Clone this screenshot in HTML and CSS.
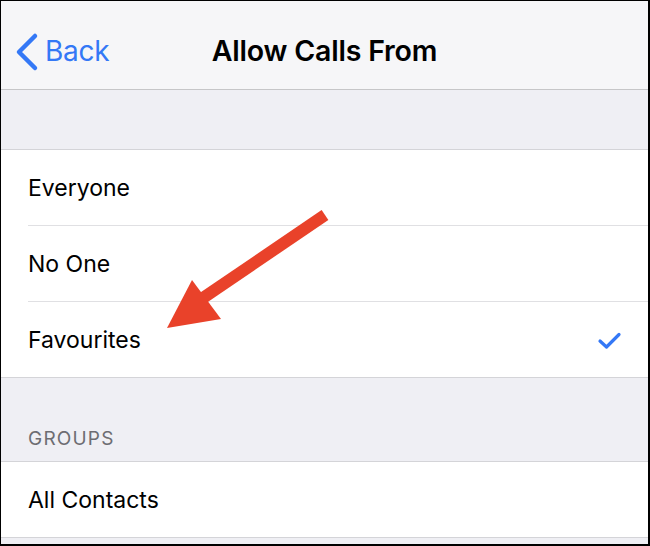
FILE: index.html
```html
<!DOCTYPE html>
<html>
<head>
<meta charset="utf-8">
<link rel="stylesheet" href="styles.css">
</head>
<body>
<div class="screen">
  <header class="nav">
    <div class="back">
      <svg class="chev" width="24" height="40" viewBox="0 0 24 40"><path d="M20 4 L4 20 L20 36" fill="none" stroke="#3478f6" stroke-width="4.5" stroke-linecap="round" stroke-linejoin="round"/></svg>
      <span>Back</span>
    </div>
    <div class="title">Allow Calls From</div>
  </header>
  <div class="gap gap-top"></div>
  <div class="group">
    <div class="row"><span>Everyone</span></div>
    <div class="row"><span>No One</span></div>
    <div class="row last"><span>Favourites</span>
      <svg class="check" width="26" height="20" viewBox="0 0 26 20"><path d="M3 10 L9.5 16 L22 3.5" fill="none" stroke="#3478f6" stroke-width="3.2" stroke-linecap="round" stroke-linejoin="round"/></svg>
    </div>
  </div>
  <div class="gap gap-groups"><span>GROUPS</span></div>
  <div class="group">
    <div class="row last"><span>All Contacts</span></div>
  </div>
  <div class="gap gap-bottom"></div>
  <svg class="arrow" width="650" height="546" viewBox="0 0 650 546">
    <line x1="325" y1="215" x2="200" y2="300" stroke="#e9422a" stroke-width="12"/>
    <polygon points="192,280 167,328 221,319" fill="#e9422a"/>
  </svg>
</div>
</body>
</html>
```
FILE: styles.css
```css
html, body {
  margin: 0;
  padding: 0;
  background: #000;
}
body {
  width: 650px;
  height: 546px;
  overflow: hidden;
}
.screen {
  position: relative;
  margin: 1px 2px 0 1px;
  height: 543px;
  background: #efeff4;
  font-family: Inter, "Noto Sans", sans-serif;
  overflow: hidden;
}
.nav {
  height: 88px;
  background: #f6f6f8;
  border-bottom: 1px solid #c6c6c8;
  display: flex;
  align-items: center;
  justify-content: center;
  position: relative;
}
.back {
  position: absolute;
  left: 14px;
  top: 31px;
  display: flex;
  align-items: center;
  gap: 6px;
  color: #3478f6;
  font-size: 28px;
  letter-spacing: -0.3px;
}
.back span {
  margin-top: -2px;
}
.title {
  font-size: 28.5px;
  font-weight: 600;
  color: #000;
  letter-spacing: -0.2px;
  margin-top: 10px;
}
.gap-top {
  height: 59px;
  border-bottom: 1px solid #d4d4d8;
}
.group {
  background: #fff;
  border-bottom: 1px solid #d4d4d8;
}
.row {
  height: 75px;
  margin-left: 27px;
  padding-right: 25px;
  border-bottom: 1px solid #e0e0e3;
  display: flex;
  align-items: center;
  justify-content: space-between;
  font-size: 23px;
  color: #000;
}
.row.last {
  border-bottom: none;
}
.check {
  margin-top: 2px;
}
.gap-groups {
  height: 84px;
  border-bottom: 1px solid #d4d4d8;
  display: flex;
  align-items: flex-end;
  padding-left: 27px;
  box-sizing: border-box;
  padding-bottom: 11px;
  color: #6d6d72;
  font-size: 19px;
  letter-spacing: 1.2px;
}
.gap-bottom {
  height: 6px;
}
.arrow {
  position: absolute;
  left: -1px;
  top: -1px;
  pointer-events: none;
}
```
